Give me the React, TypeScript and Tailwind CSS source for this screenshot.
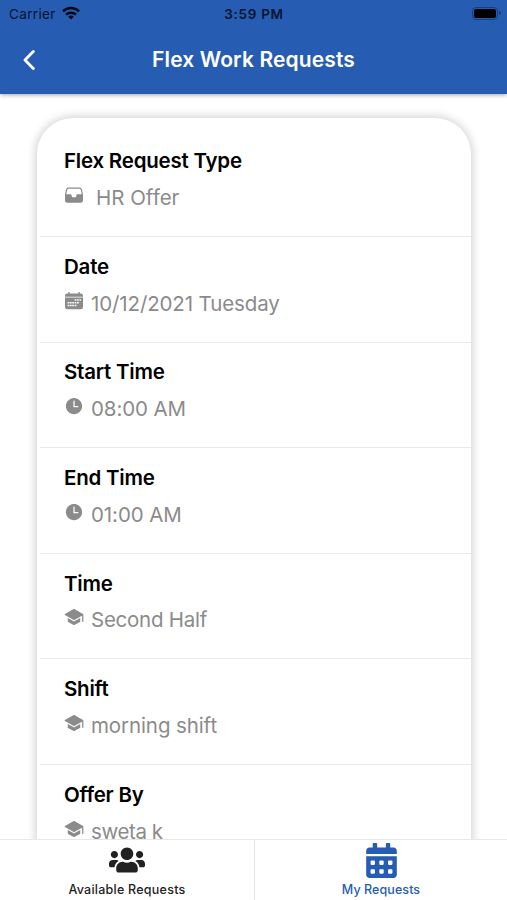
import { ReactNode } from "react"
import { FaCalendarAlt, FaUsers } from "react-icons/fa"
import { IoSchool, IoTime } from "react-icons/io5"

function CalendarIcon() {
  return (
    <svg viewBox="0 0 20 20" className="h-[20px] w-[20px]" fill="currentColor">
      <path d="M4.200 1h1.400v1.500h8.800V1h1.400v1.500h1a2.200 2.200 0 0 1 2.200 2.200v1.100H1V4.700a2.200 2.200 0 0 1 2.200-2.200h1z" />
      <path
        fillRule="evenodd"
        d="M1 6.500h18v9.400a2.400 2.400 0 0 1-2.400 2.400H3.400A2.400 2.400 0 0 1 1 15.900zM10.700 8.200h1.700v1.600h-1.700zM13.100 8.200h1.700v1.600h-1.700zM15.500 8.200h1.500v1.600h-1.500zM3.600 10.900h1.700v1.600H3.600zM5.900 10.900h1.700v1.600H5.900zM8.300 10.900h1.700v1.600H8.300zM10.700 10.900h1.700v1.600h-1.700zM13.100 10.900h1.700v1.600h-1.700zM3.600 13.700h1.700v1.600H3.600zM5.900 13.700h1.700v1.600H5.900zM8.300 13.700h1.700v1.600H8.300zM10.700 13.700h1.700v1.600h-1.700z"
      />
    </svg>
  )
}

function TrayIcon() {
  return (
    <svg viewBox="0 0 20 20" className="h-[20px] w-[20px]">
      <path
        d="M1.600 9.600 2.600 4.700a2.100 2.100 0 0 1 2.100-1.600h10.600a2.100 2.100 0 0 1 2.100 1.600l1 4.900"
        fill="none"
        stroke="currentColor"
        strokeWidth="1.200"
      />
      <path d="M1 9.200h5.800c.4 0 .6.300.7.700a2.500 2.500 0 0 0 5 0c.1-.4.3-.7.700-.7H19v6.200a2.400 2.400 0 0 1-2.400 2.400H3.400A2.400 2.400 0 0 1 1 15.400z" fill="currentColor" />
    </svg>
  )
}

function WifiIcon() {
  return (
    <svg viewBox="0 0 18 14" className="h-[14px] w-[18px]" fill="none" stroke="currentColor" strokeWidth="2.500">
      <path d="M1 5.400a11.400 11.400 0 0 1 16 0" />
      <path d="M4 8.700a7.100 7.100 0 0 1 10 0" />
      <path d="M9 13.500 6.200 10.700a3.900 3.900 0 0 1 5.600 0z" fill="currentColor" stroke="none" />
    </svg>
  )
}

interface Row {
  label: string
  value: string
  valueClass: string
  icon: ReactNode
}

const rows: Row[] = [
  { label: "Flex Request Type", value: "HR Offer", valueClass: "pl-[5px]", icon: <TrayIcon /> },
  { label: "Date", value: "10/12/2021 Tuesday", valueClass: "tracking-[-0.12px]", icon: <CalendarIcon /> },
  { label: "Start Time", value: "08:00 AM", valueClass: "tracking-[-0.12px]", icon: <IoTime size={20} /> },
  { label: "End Time", value: "01:00 AM", valueClass: "tracking-[-0.1px]", icon: <IoTime size={20} /> },
  { label: "Time", value: "Second Half", valueClass: "tracking-[-0.25px]", icon: <IoSchool size={20} /> },
  { label: "Shift", value: "morning shift", valueClass: "tracking-[-0.1px]", icon: <IoSchool size={20} /> },
  { label: "Offer By", value: "sweta k", valueClass: "tracking-[-0.4px]", icon: <IoSchool size={20} /> },
]

function DetailRow({ row }: { row: Row }) {
  return (
    <div className="ml-[3px] h-[105.6px] shrink-0 border-b border-[#e9e9e9] pl-6 pt-[15.9px]">
      <p className="text-[20.5px] leading-[28px] font-semibold tracking-[-0.22px] text-black">{row.label}</p>
      <div className="mt-[8.8px] flex h-[28px] items-center text-[#8b8b8b]">
        <span className="mb-[6px] flex w-[27px] shrink-0">{row.icon}</span>
        <p className={`text-[20.5px] leading-[28px] whitespace-nowrap ${row.valueClass}`}>{row.value}</p>
      </div>
    </div>
  )
}

export default function App() {
  return (
    <div className="flex h-[900px] w-[507px] flex-col overflow-hidden bg-white font-['Inter',sans-serif]">
      <header className="z-10 h-[94px] shrink-0 bg-[#265cb2] shadow-[0_1px_4px_rgba(0,0,0,0.35)]">
        <div className="grid h-[28px] grid-cols-3 items-center pl-[9px] pr-[6px] text-[13.5px] text-[#06142e]">
          <div className="flex items-center gap-[6px]">
            <span className="tracking-[0.35px]">Carrier</span>
            <span className="mb-[3px] text-[#030a17]">
              <WifiIcon />
            </span>
          </div>
          <span className="pr-[2px] text-center font-semibold tracking-[0.7px]">3:59 PM</span>
          <div className="mb-[2px] flex items-center justify-end gap-px">
            <div className="h-[13px] w-[26px] rounded-[4px] border border-[#173f80] p-px">
              <div className="h-full rounded-[2px] bg-black" />
            </div>
            <div className="h-[4px] w-[2px] rounded-r bg-[#173f80]" />
          </div>
        </div>
        <div className="grid h-[64px] grid-cols-[50px_1fr_50px] items-center text-white">
          <svg viewBox="0 0 12 20" className="ml-[23px] h-[20px] w-[12px]" fill="none" stroke="currentColor" strokeWidth="2.800">
            <path d="M10.300 1.600 2 10l8.300 8.400" strokeLinecap="round" strokeLinejoin="round" />
          </svg>
          <h1 className="text-center text-[21px] font-semibold tracking-[0.12px]">Flex Work Requests</h1>
        </div>
      </header>
      <main className="min-h-0 flex-1 overflow-hidden pl-[37px] pr-[36px] pt-[24px]">
        <div className="flex h-[800px] flex-col rounded-[36px] bg-white pt-[13.4px] shadow-[0_0_9px_2px_rgba(0,0,0,0.17)]">
          {rows.map((row) => (
            <DetailRow key={row.label} row={row} />
          ))}
        </div>
      </main>
      <nav className="z-10 grid h-[61px] shrink-0 grid-cols-[255px_1fr] border-t border-[#e8e8e8] bg-white text-[12.5px] font-medium">
        <div className="flex flex-col items-center border-r border-[#e4e4e4] text-[#222]">
          <FaUsers size={36} className="mt-[2px]" />
          <span className="mt-[3px] tracking-[0.25px]">Available Requests</span>
        </div>
        <div className="flex flex-col items-center text-[#265cb2]">
          <FaCalendarAlt size={35} className="mt-[3px]" />
          <span className="mt-[3px] tracking-[0.08px]">My Requests</span>
        </div>
      </nav>
    </div>
  )
}
